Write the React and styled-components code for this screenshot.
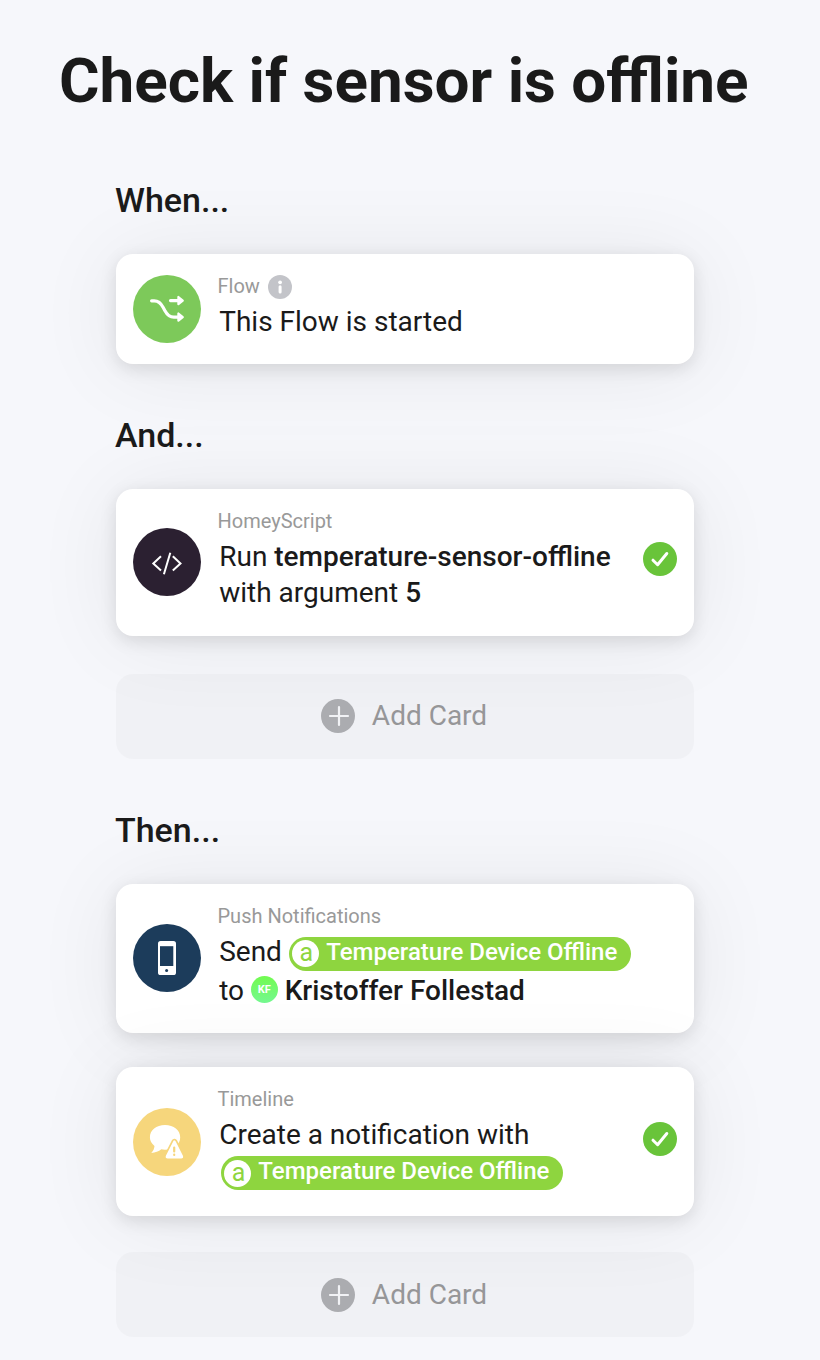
import React from 'react';
import styled, { createGlobalStyle } from 'styled-components';

const GlobalStyle = createGlobalStyle`
  * { box-sizing: border-box; }
  body {
    margin: 0;
    background: #f6f7fb;
    color: #1a1a1a;
    font-family: Roboto, "Liberation Sans", sans-serif;
  }
`;

const Page = styled.main`
  min-height: 1360px;
  padding: 45px 59px 23px;
  overflow: hidden;
`;

const Title = styled.h1`
  margin: 0;
  font-size: 62px;
  line-height: 72px;
  font-weight: 700;
  white-space: nowrap;
`;

const Section = styled.section`
  width: 578px;
  margin: ${({ $top }) => $top}px 0 0 57px;
`;

const SectionTitle = styled.h2`
  margin: 0 0 34px -1px;
  font-size: 34px;
  line-height: 40px;
  font-weight: 500;
`;

const Card = styled.article`
  display: flex;
  align-items: center;
  height: ${({ $height }) => $height}px;
  margin-top: ${({ $gap }) => $gap || 0}px;
  padding: 0 17px;
  border-radius: 17px;
  background: #fff;
  box-shadow: 0 4.5px 17px rgba(0, 0, 0, 0.11), 0 4px 85px rgba(0, 0, 0, 0.075);
`;

const AppIcon = styled.div`
  flex: none;
  width: 68px;
  height: 68px;
  margin-bottom: ${({ $lift }) => $lift || 0}px;
  border-radius: 50%;
  background: ${({ $color }) => $color};
  svg { display: block; }
`;

const CardBody = styled.div`
  flex: 1;
  align-self: flex-start;
  padding: 19px 0 0 16.5px;
  white-space: nowrap;
`;

const Label = styled.div`
  display: flex;
  align-items: center;
  gap: 8.5px;
  height: 26px;
  font-size: 20px;
  line-height: 26px;
  color: #999;
  svg { margin-top: 2px; }
`;

const Line = styled.div`
  display: flex;
  align-items: center;
  height: 36px;
  margin-top: ${({ $top }) => $top || 0}px;
  padding-left: 1.7px;
  font-size: 28px;
  line-height: 36px;
  white-space: pre;
`;

const Strong = styled.span`
  font-weight: 500;
`;

const Tag = styled.span`
  display: flex;
  align-items: center;
  width: 342px;
  height: 34px;
  margin-top: ${({ $drop }) => $drop || 0}px;
  margin-left: ${({ $left }) => $left}px;
  padding-left: 3.5px;
  border-radius: 17px;
  background: #8ed53f;
  color: #fff;
  font-size: 24px;
  line-height: 30px;
  font-weight: 500;
`;

const TagLetter = styled.span`
  flex: none;
  width: 27px;
  height: 27px;
  margin-right: 6.8px;
  padding-left: 1px;
  border-radius: 50%;
  background: #fff;
  color: #8ed53f;
  font-size: 25px;
  line-height: 26px;
  font-weight: 400;
  text-align: center;
`;

const TagText = styled.span`
  padding-bottom: 4px;
`;

const Avatar = styled.span`
  width: 27px;
  height: 27px;
  margin: 0 6.8px 4px;
  border-radius: 50%;
  background: linear-gradient(#72fb50, #74f890);
  color: #fff;
  font: 700 11px/27px Roboto, sans-serif;
  text-align: center;
`;

const AddCard = styled.button`
  display: flex;
  align-items: center;
  justify-content: center;
  gap: 17px;
  position: relative;
  width: 100%;
  height: 85px;
  margin: ${({ $gap }) => $gap}px 0 0;
  padding: ${({ $drop }) => $drop || 0}px 2px 1px 0;
  border: 0;
  border-radius: 17px;
  background: rgba(0, 0, 0, 0.025);
  color: #969698;
  font: 400 28px/36px Roboto, "Liberation Sans", sans-serif;
`;

const FlowIcon = () => (
  <svg width="68" height="68" viewBox="0 0 68 68" fill="none" stroke="#fff" strokeWidth="3.2" strokeLinecap="round" strokeLinejoin="round">
    <path d="M18.600 25.800h2.600c4 0 6.600 2 9 6.600l1.600 3c2.600 4.800 5 6.700 9 6.700H46M37.500 25.600H46" />
    <path d="M45.400 22v7.200l4.400-3.600zM45.400 38.500v7.200l4.400-3.600z" fill="#fff" strokeWidth="2.200" />
  </svg>
);

const CodeIcon = () => (
  <svg width="68" height="68" viewBox="0 0 68 68" fill="none" stroke="#fff" strokeWidth="2">
    <path d="M28 28.300l-7.700 7.100 7.700 7.100M39.800 28.300l7.700 7.100-7.700 7.100M37.300 24.800l-6.400 21.500" />
  </svg>
);

const PhoneIcon = () => (
  <svg width="68" height="68" viewBox="0 0 68 68">
    <rect x="25" y="17" width="18" height="34" rx="2.600" fill="#fff" />
    <rect x="27" y="22.200" width="13.300" height="19.800" fill="#1c3c5b" />
    <circle cx="33.600" cy="46.600" r="1.500" fill="#1c3c5b" />
  </svg>
);

const TimelineIcon = () => (
  <svg width="68" height="68" viewBox="0 0 68 68">
    <path d="M32 17c8.700 0 15.200 5 15.200 12.300 0 7.500-6.500 12.400-15.200 12.400-1.400 0-2.500-.1-3.700-.4-2.500 2-6 3.600-10 3.600 2-1.900 3-4.400 3.200-6.900-3-2.400-4.600-5.300-4.600-8.700C16.900 22 23.300 17 32 17z" fill="#fff" />
    <path d="M41 33.500L33.600 48.200q-.6 1.500 1 1.500h13.600q1.600 0 1-1.500L41.900 33.600q-.5-.8-.9-.1z" fill="#fff" stroke="#f6d67c" strokeWidth="5" strokeLinejoin="round" />
    <path d="M41 33.500L33.600 48.200q-.6 1.500 1 1.500h13.600q1.600 0 1-1.500L41.900 33.600q-.5-.8-.9-.1z" fill="#fff" stroke="#fff" strokeWidth="1.600" strokeLinejoin="round" />
    <path d="M41.200 39.500v4M41.200 46.700v.3" stroke="#f6d67c" strokeWidth="2.200" strokeLinecap="round" />
  </svg>
);

const InfoIcon = () => (
  <svg width="24" height="24" viewBox="0 0 24 24">
    <circle cx="12" cy="12" r="12" fill="#c3c4c9" />
    <circle cx="12.100" cy="7.300" r="1.900" fill="#fff" />
    <path d="M12.100 11.700v5.300" stroke="#fff" strokeWidth="3" strokeLinecap="round" />
  </svg>
);

const CheckSvg = styled.svg`
  flex: none;
  margin-bottom: ${({ $lift }) => $lift}px;
`;

const CheckIcon = ({ lift }) => (
  <CheckSvg $lift={lift} width="34" height="34" viewBox="0 0 34 34">
    <circle cx="17" cy="17" r="17" fill="#69c43a" />
    <path d="M10 18.200l4.600 4.500 9.200-11.200" fill="none" stroke="#fff" strokeWidth="3" strokeLinecap="round" strokeLinejoin="round" />
  </CheckSvg>
);

const PlusIcon = () => (
  <svg width="34" height="34" viewBox="0 0 34 34">
    <circle cx="17" cy="17" r="17" fill="#abacb0" />
    <path d="M18 8v18M9 17h18" stroke="#f1f2f5" strokeWidth="2.200" strokeLinecap="round" />
  </svg>
);

const DeviceTag = ({ left, drop }) => (
  <Tag $left={left} $drop={drop}>
    <TagLetter>a</TagLetter>
    <TagText>Temperature Device Offline</TagText>
  </Tag>
);

const AddCardButton = ({ gap, drop }) => (
  <AddCard $gap={gap} $drop={drop}>
    <PlusIcon />
    Add Card
  </AddCard>
);

export default function App() {
  return (
    <Page>
      <GlobalStyle />
      <Title>Check if sensor is offline</Title>

      <Section $top={63}>
        <SectionTitle>When...</SectionTitle>
        <Card $height={110}>
          <AppIcon $color="#7dc95a"><FlowIcon /></AppIcon>
          <CardBody>
            <Label>Flow <InfoIcon /></Label>
            <Line $top={5}>This Flow is started</Line>
          </CardBody>
        </Card>
      </Section>

      <Section $top={51}>
        <SectionTitle>And...</SectionTitle>
        <Card $height={147}>
          <AppIcon $color="#2b2031" $lift={1}><CodeIcon /></AppIcon>
          <CardBody>
            <Label>HomeyScript</Label>
            <Line $top={5}>Run <Strong>temperature-sensor-offline</Strong></Line>
            <Line>with argument <Strong>5</Strong></Line>
          </CardBody>
          <CheckIcon lift={7} />
        </Card>
        <AddCardButton gap={38} />
      </Section>

      <Section $top={51}>
        <SectionTitle>Then...</SectionTitle>
        <Card $height={149}>
          <AppIcon $color="#1c3c5b" $lift={1}><PhoneIcon /></AppIcon>
          <CardBody>
            <Label>Push Notifications</Label>
            <Line $top={5}>Send<DeviceTag left={7} drop={3} /></Line>
            <Line $top={3}>to<Avatar>KF</Avatar><Strong>Kristoffer Follestad</Strong></Line>
          </CardBody>
        </Card>
        <Card $height={149} $gap={34}>
          <AppIcon $color="#f6d67c"><TimelineIcon /></AppIcon>
          <CardBody>
            <Label>Timeline</Label>
            <Line $top={5}>Create a notification with</Line>
            <Line $top={2}><DeviceTag left={1.8} /></Line>
          </CardBody>
          <CheckIcon lift={5} />
        </Card>
        <AddCardButton gap={36} drop={2} />
      </Section>
    </Page>
  );
}
